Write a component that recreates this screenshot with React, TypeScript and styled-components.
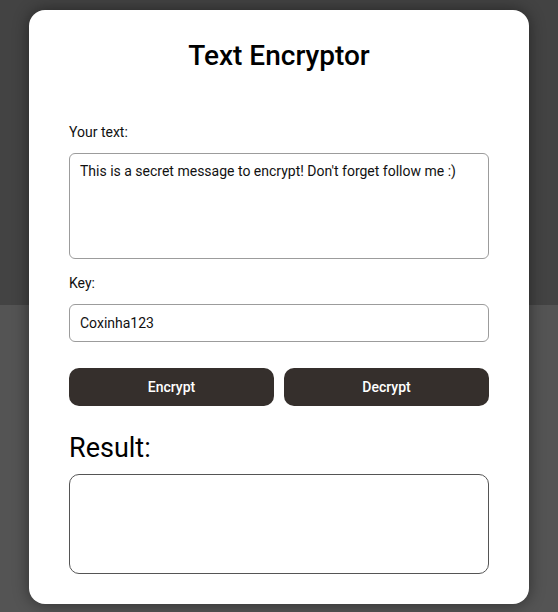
import React, { useState } from "react";
import styled, { createGlobalStyle } from "styled-components";

const GlobalStyle = createGlobalStyle`
  * { box-sizing: border-box; }
  html, body { margin: 0; padding: 0; height: 100%; }
  body {
    font-family: Roboto, "Liberation Sans", Arial, sans-serif;
    background: linear-gradient(to bottom, #434343 0, #434343 305px, #545454 305px, #545454 100%);
    min-height: 612px;
  }
  #root { min-height: 612px; }
`;

const Page = styled.div`
  display: flex;
  justify-content: center;
  padding-top: 10px;
  min-height: 612px;
`;

const Card = styled.main`
  width: 500px;
  height: 594px;
  background: #ffffff;
  border-radius: 16px;
  padding: 30px 40px 30px;
  box-shadow: 0 0 16px rgba(0, 0, 0, 0.45);
  display: flex;
  flex-direction: column;
`;

const Title = styled.h1`
  margin: -1px 0 52px;
  font-size: 28px;
  line-height: 33px;
  font-weight: 500;
  text-align: center;
  color: #000;
`;

const Label = styled.label<{ $gap?: number }>`
  display: block;
  font-size: 14px;
  line-height: 16px;
  color: #111;
  margin-bottom: 13px;
  margin-top: ${(p) => p.$gap ?? 0}px;
`;

const TextArea = styled.textarea`
  display: block;
  width: 100%;
  height: 106px;
  resize: none;
  border: 1px solid #9c9c9c;
  border-radius: 6px;
  padding: 9px 10px;
  font-family: inherit;
  font-size: 14px;
  line-height: 16px;
  color: #111;
  outline: none;
`;

const Input = styled.input`
  display: block;
  width: 100%;
  height: 38px;
  border: 1px solid #9c9c9c;
  border-radius: 6px;
  padding: 0 10px;
  font-family: inherit;
  font-size: 14px;
  color: #111;
  outline: none;
`;

const ButtonRow = styled.div`
  display: grid;
  grid-template-columns: 1fr 1fr;
  gap: 10px;
  margin-top: 26px;
`;

const Button = styled.button`
  height: 38px;
  border: none;
  border-radius: 10px;
  background: #352f2c;
  color: #fff;
  font-family: inherit;
  font-size: 14px;
  font-weight: 500;
  cursor: pointer;
`;

const ResultTitle = styled.h2`
  margin: 26px 0 10px;
  font-size: 27px;
  line-height: 32px;
  font-weight: 400;
  color: #000;
`;

const ResultBox = styled.div`
  height: 100px;
  border: 1px solid #555;
  border-radius: 10px;
  padding: 9px 10px;
  font-size: 14px;
  color: #111;
`;

export default function App() {
  const [text, setText] = useState(
    "This is a secret message to encrypt! Don't forget follow me :)"
  );
  const [key, setKey] = useState("Coxinha123");
  const [result] = useState("");

  return (
    <>
      <GlobalStyle />
      <Page>
        <Card>
          <Title>Text Encryptor</Title>
          <Label>Your text:</Label>
          <TextArea value={text} onChange={(e) => setText(e.target.value)} />
          <Label $gap={16}>Key:</Label>
          <Input value={key} onChange={(e) => setKey(e.target.value)} />
          <ButtonRow>
            <Button>Encrypt</Button>
            <Button>Decrypt</Button>
          </ButtonRow>
          <ResultTitle>Result:</ResultTitle>
          <ResultBox>{result}</ResultBox>
        </Card>
      </Page>
    </>
  );
}
